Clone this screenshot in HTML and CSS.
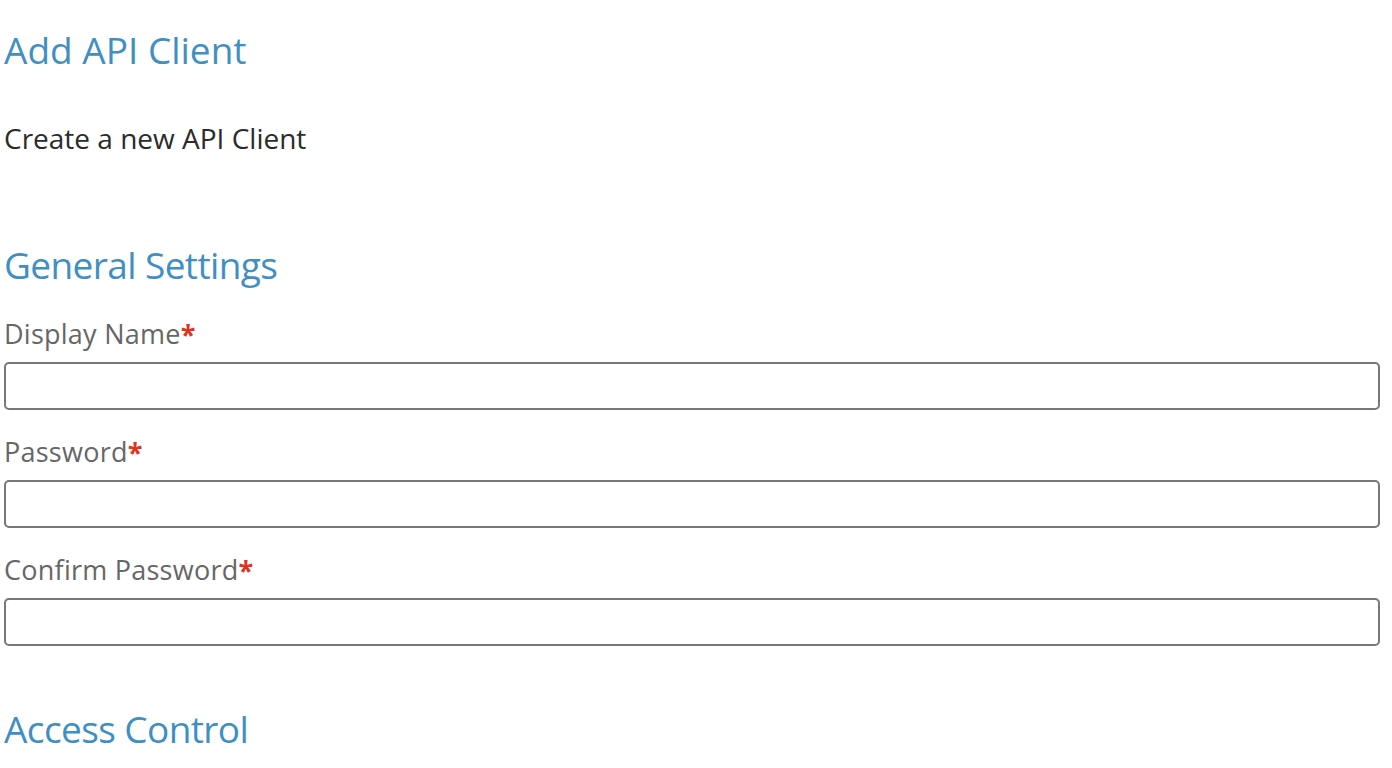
FILE: index.html
```html
<!DOCTYPE html>
<html lang="en">
<head>
<meta charset="utf-8">
<title>Add API Client</title>
<link rel="stylesheet" href="styles.css">
</head>
<body>
<main class="page">
  <h1 class="page-title">Add API Client</h1>
  <p class="page-desc">Create a new API Client</p>

  <section class="section">
    <h2 class="section-title">General Settings</h2>
    <div class="fields">
      <div class="field">
        <label class="field-label" for="display-name">Display Name<span class="req">*</span></label>
        <input class="field-input" id="display-name" type="text">
      </div>
      <div class="field">
        <label class="field-label" for="password">Password<span class="req">*</span></label>
        <input class="field-input" id="password" type="password">
      </div>
      <div class="field">
        <label class="field-label" for="confirm-password">Confirm Password<span class="req">*</span></label>
        <input class="field-input" id="confirm-password" type="password">
      </div>
    </div>
  </section>

  <section class="section section-last">
    <h2 class="section-title">Access Control</h2>
  </section>
</main>
</body>
</html>
```

FILE: styles.css
```css
html, body {
  margin: 0;
  padding: 0;
  background: #ffffff;
}

body {
  font-family: "Open Sans", "Liberation Sans", sans-serif;
  overflow: hidden;
}

.page {
  padding: 25px 12px 0 4px;
}

.page-title {
  margin: 0;
  font-size: 37px;
  font-weight: 400;
  line-height: 50px;
  color: #3f8fc4;
}

.page-desc {
  margin: 43px 0 0;
  font-size: 28px;
  line-height: 40px;
  color: #2b2b2b;
}

.section {
  margin-top: 82px;
}

.section-last {
  margin-top: 34px;
}

.section-title {
  margin: 0;
  font-size: 37px;
  font-weight: 400;
  line-height: 50px;
  letter-spacing: -0.6px;
  color: #3f8fc4;
}

.fields {
  display: flex;
  flex-direction: column;
  gap: 24px;
  padding-top: 26px;
}

.field {
  display: flex;
  flex-direction: column;
  gap: 10px;
}

.field:last-child {
  margin-bottom: 24px;
}

.field-label {
  font-size: 27px;
  line-height: 36px;
  letter-spacing: 0.25px;
  color: #666666;
}

.req {
  color: #e2311f;
  font-weight: 700;
}

.field-input {
  box-sizing: border-box;
  width: 100%;
  height: 48px;
  margin: 0;
  border: 2px solid #777777;
  border-radius: 5px;
  background: #ffffff;
  font: inherit;
  padding: 0 12px;
}
```
